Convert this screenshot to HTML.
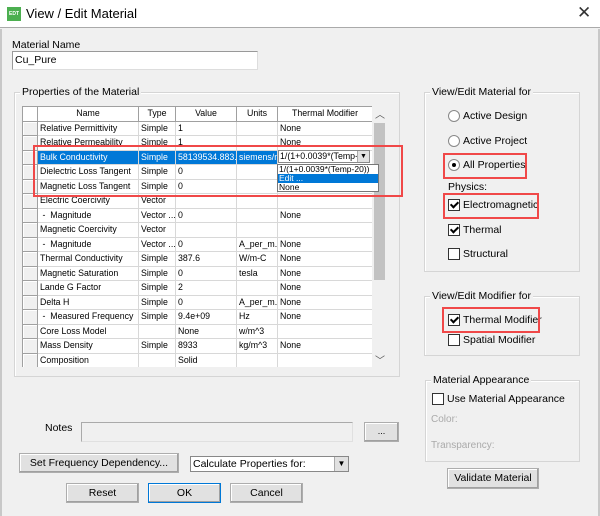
<!DOCTYPE html>
<html><head><style>
*{margin:0;padding:0;box-sizing:border-box}
body{width:600px;height:516px;background:#f0f0f0;font-family:"Liberation Sans",sans-serif;font-size:10.5px;color:#000;position:relative;overflow:hidden}
.a{position:absolute;white-space:nowrap}
.grp{position:absolute;border:1px solid #d5d5d5;box-shadow:inset 1px 1px 0 #fff}
.lg{position:absolute;background:#f0f0f0;padding:0 2px;top:-7px;left:5px;white-space:nowrap}
.btn{position:absolute;background:#e1e1e1;border:1px solid #adadad;box-shadow:inset -1px -1px 0 #a0a0a0,inset 1px 1px 0 #fff;text-align:center;font-size:10.5px}
.cb{position:absolute;width:12px;height:12px;border:1px solid #333;background:#fff}
.cb.on::after{content:"";position:absolute;left:3px;top:0px;width:3px;height:6px;border:solid #000;border-width:0 2px 2px 0;transform:rotate(45deg)}
.rd{position:absolute;width:12px;height:12px;border:1px solid #888;border-radius:50%;background:#fff}
.red{position:absolute;border:2px solid #f04848}
table{border-collapse:collapse;table-layout:fixed;font-size:8.8px}
td{border:1px solid #d8d8d8;height:14.5px;padding:0 2px;white-space:nowrap;overflow:hidden;background:#fff;line-height:13px}
td.s{background:#f0f0f0;border:1px solid #a0a0a0;box-shadow:inset 1px 1px 0 #fff}
tr.h td{background:#fff;text-align:center;border-color:#a0a0a0}
tr.sel td{background:#0078d7;color:#fff}
</style></head><body>
<div class="a" style="left:0;top:0;width:600px;height:28px;background:#fff;border-bottom:1px solid #aaa"></div>
<div class="a" style="left:7px;top:7px;width:14px;height:14px;background:#4caf50;color:#fff;font-size:5px;font-weight:bold;line-height:14px;text-align:center">EDT</div>
<div class="a" style="left:26px;top:6px;font-size:13px">View / Edit Material</div>
<div class="a" style="left:577px;top:3px;font-size:17px;color:#333">✕</div>
<div class="a" style="left:0;top:29px;width:2px;height:487px;background:#c8c8c8"></div>
<div class="a" style="left:598px;top:29px;width:2px;height:487px;background:#c8c8c8"></div>

<div class="a" style="left:12px;top:39px">Material Name</div>
<div class="a" style="left:12px;top:51px;width:246px;height:19px;background:#fff;border:1px solid #999;border-right-color:#ddd;border-bottom-color:#ddd;padding:2px 2px">Cu_Pure</div>

<div class="grp" style="left:14px;top:92px;width:386px;height:285px"><div class="lg">Properties of the Material</div></div>
<div class="a" style="left:22px;top:106px;width:365px;height:261px;background:#fff;overflow:hidden">
<table style="width:350px">
<colgroup><col style="width:15px"><col style="width:101px"><col style="width:37px"><col style="width:61px"><col style="width:41px"><col style="width:95px"></colgroup>
<tr class="h"><td class="s"></td><td>Name</td><td>Type</td><td>Value</td><td>Units</td><td>Thermal Modifier</td></tr>
<tr><td class="s"></td><td>Relative Permittivity</td><td>Simple</td><td>1</td><td></td><td>None</td></tr>
<tr><td class="s"></td><td>Relative Permeability</td><td>Simple</td><td>1</td><td></td><td>None</td></tr>
<tr class="sel"><td class="s" style="background:#f0f0f0"></td><td>Bulk Conductivity</td><td>Simple</td><td>58139534.883...</td><td>siemens/m</td><td style="background:#fff"></td></tr>
<tr><td class="s"></td><td>Dielectric Loss Tangent</td><td>Simple</td><td>0</td><td></td><td></td></tr>
<tr><td class="s"></td><td>Magnetic Loss Tangent</td><td>Simple</td><td>0</td><td></td><td></td></tr>
<tr><td class="s"></td><td>Electric Coercivity</td><td>Vector</td><td></td><td></td><td></td></tr>
<tr><td class="s"></td><td>&nbsp;-&nbsp; Magnitude</td><td>Vector ...</td><td>0</td><td></td><td>None</td></tr>
<tr><td class="s"></td><td>Magnetic Coercivity</td><td>Vector</td><td></td><td></td><td></td></tr>
<tr><td class="s"></td><td>&nbsp;-&nbsp; Magnitude</td><td>Vector ...</td><td>0</td><td>A_per_m...</td><td>None</td></tr>
<tr><td class="s"></td><td>Thermal Conductivity</td><td>Simple</td><td>387.6</td><td>W/m-C</td><td>None</td></tr>
<tr><td class="s"></td><td>Magnetic Saturation</td><td>Simple</td><td>0</td><td>tesla</td><td>None</td></tr>
<tr><td class="s"></td><td>Lande G Factor</td><td>Simple</td><td>2</td><td></td><td>None</td></tr>
<tr><td class="s"></td><td>Delta H</td><td>Simple</td><td>0</td><td>A_per_m...</td><td>None</td></tr>
<tr><td class="s"></td><td>&nbsp;-&nbsp; Measured Frequency</td><td>Simple</td><td>9.4e+09</td><td>Hz</td><td>None</td></tr>
<tr><td class="s"></td><td>Core Loss Model</td><td></td><td>None</td><td>w/m^3</td><td></td></tr>
<tr><td class="s"></td><td>Mass Density</td><td>Simple</td><td>8933</td><td>kg/m^3</td><td>None</td></tr>
<tr><td class="s"></td><td>Composition</td><td></td><td>Solid</td><td></td><td></td></tr>
</table>
<div class="a" style="left:350px;top:0;width:15px;height:261px;background:#f0f0f0"></div>
<div class="a" style="left:352px;top:17px;width:11px;height:157px;background:#c2c2c2"></div>
<div class="a" style="left:353px;top:0px;font-size:10px;color:#555">︿</div>
<div class="a" style="left:353px;top:246px;font-size:10px;color:#555">﹀</div>
</div>
<div class="a" style="left:278px;top:150px;width:92px;height:13px;background:#fff;border:1px solid #888;font-size:8.8px;line-height:11px;padding-left:1px;overflow:hidden">1/(1+0.0039*(Temp-2</div>
<div class="a" style="left:357px;top:151px;width:12px;height:11px;background:#e1e1e1;border-left:1px solid #aaa;font-size:7px;text-align:center;line-height:11px">▼</div>
<div class="a" style="left:277px;top:164px;width:102px;height:28px;background:#fff;border:1px solid #777;font-size:8.5px;line-height:9px">
<div style="padding-left:1px">1/(1+0.0039*(Temp-20))</div>
<div style="background:#0078d7;color:#fff;padding-left:1px">Edit ...</div>
<div style="padding-left:1px">None</div></div>
<div class="red" style="left:33px;top:145px;width:370px;height:52px"></div>

<div class="grp" style="left:424px;top:92px;width:156px;height:180px"><div class="lg">View/Edit Material for</div></div>
<div class="rd" style="left:448px;top:110px"></div><div class="a" style="left:463px;top:110px">Active Design</div>
<div class="rd" style="left:448px;top:135px"></div><div class="a" style="left:463px;top:135px">Active Project</div>
<div class="rd" style="left:448px;top:159px"><div style="position:absolute;left:3px;top:3px;width:4px;height:4px;background:#000;border-radius:50%"></div></div><div class="a" style="left:463px;top:159px">All Properties</div>
<div class="red" style="left:443px;top:153px;width:84px;height:26px"></div>
<div class="a" style="left:448px;top:181px">Physics:</div>
<div class="cb on" style="left:448px;top:199px"></div><div class="a" style="left:463px;top:199px">Electromagnetic</div>
<div class="red" style="left:443px;top:193px;width:96px;height:26px"></div>
<div class="cb on" style="left:448px;top:224px"></div><div class="a" style="left:463px;top:224px">Thermal</div>
<div class="cb" style="left:448px;top:248px"></div><div class="a" style="left:463px;top:248px">Structural</div>

<div class="grp" style="left:424px;top:296px;width:156px;height:60px"><div class="lg">View/Edit Modifier for</div></div>
<div class="cb on" style="left:448px;top:314px"></div><div class="a" style="left:463px;top:314px">Thermal Modifier</div>
<div class="red" style="left:442px;top:307px;width:98px;height:26px"></div>
<div class="cb" style="left:448px;top:334px"></div><div class="a" style="left:463px;top:334px">Spatial Modifier</div>

<div class="grp" style="left:425px;top:380px;width:155px;height:82px"><div class="lg">Material Appearance</div></div>
<div class="cb" style="left:432px;top:393px"></div><div class="a" style="left:447px;top:393px">Use Material Appearance</div>
<div class="a" style="left:431px;top:414px;color:#aaa;font-size:10px">Color:</div>
<div class="a" style="left:431px;top:440px;color:#aaa;font-size:10px">Transparency:</div>
<div class="btn" style="left:447px;top:468px;width:92px;height:21px;line-height:19px">Validate Material</div>

<div class="a" style="left:45px;top:422px">Notes</div>
<div class="a" style="left:81px;top:422px;width:272px;height:20px;background:#f0f0f0;border:1px solid #aaa;border-right-color:#e0e0e0;border-bottom-color:#e0e0e0"></div>
<div class="btn" style="left:364px;top:422px;width:35px;height:20px;line-height:16px;font-size:9px">...</div>
<div class="btn" style="left:19px;top:453px;width:160px;height:20px;line-height:18px">Set Frequency Dependency...</div>
<div class="a" style="left:190px;top:456px;width:159px;height:16px;background:#fff;border:1px solid #888;padding-left:2px;line-height:14px">Calculate Properties for:</div>
<div class="a" style="left:334px;top:457px;width:14px;height:14px;background:#e1e1e1;border-left:1px solid #aaa;font-size:8px;text-align:center;line-height:14px">▼</div>
<div class="btn" style="left:66px;top:483px;width:73px;height:20px;line-height:18px">Reset</div>
<div class="btn" style="left:148px;top:483px;width:73px;height:20px;line-height:18px;border-color:#0078d7">OK</div>
<div class="btn" style="left:230px;top:483px;width:73px;height:20px;line-height:18px">Cancel</div>
</body></html>
